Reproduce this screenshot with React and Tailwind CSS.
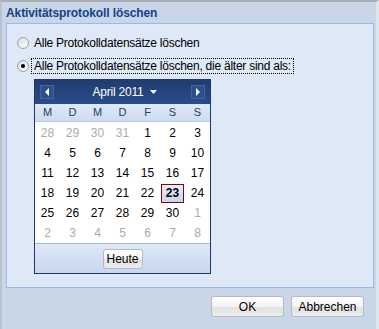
import React from 'react';

const weeks = [
  [[28, 1], [29, 1], [30, 1], [31, 1], [1], [2], [3]],
  [[4], [5], [6], [7], [8], [9], [10]],
  [[11], [12], [13], [14], [15], [16], [17]],
  [[18], [19], [20], [21], [22], [23], [24]],
  [[25], [26], [27], [28], [29], [30], [1, 1]],
  [[2, 1], [3, 1], [4, 1], [5, 1], [6, 1], [7, 1], [8, 1]],
];

const dayNames = ['M', 'D', 'M', 'D', 'F', 'S', 'S'];

function Radio({ checked }) {
  return (
    <span className="w-[12px] h-[12px] rounded-full border border-[#9aa3ad] bg-gradient-to-br from-[#d8dde2] to-white flex items-center justify-center shrink-0">
      {checked && <span className="w-[4px] h-[4px] rounded-full bg-black" />}
    </span>
  );
}

function Button({ children, className }) {
  return (
    <button
      className={
        'border border-[#b5b8c8] rounded-[3px] bg-[linear-gradient(#ffffff_0%,#f4f4f4_50%,#e1e1e1_51%,#ececec_100%)] text-[12px] text-black flex items-center justify-center ' +
        className
      }
    >
      {children}
    </button>
  );
}

function NavButton({ dir }) {
  return (
    <div className="w-[14px] h-[14px] bg-[#2d4f8e] border border-[#4466a0] flex items-center justify-center">
      <svg width="6" height="8" viewBox="0 0 6 8">
        {dir === 'left' ? (
          <path d="M5 0 L1 4 L5 8 Z" fill="white" />
        ) : (
          <path d="M1 0 L5 4 L1 8 Z" fill="white" />
        )}
      </svg>
    </div>
  );
}

export default function App() {
  return (
    <div className="w-[379px] h-[329px] bg-[#c9d6e7] border-t-2 border-t-[#a9aeb4] border-l-2 border-l-[#b9c3cf] border-r-[3px] border-r-[#dfe4ea] overflow-hidden font-['Liberation_Sans',Arial,sans-serif] flex flex-col">
      <div className="h-[21px] pl-[4px] pt-[4px] text-[12px] font-bold text-[#15428b] leading-[14px] tracking-[-0.1px]">
        Aktivitätsprotokoll löschen
      </div>

      <div className="ml-[4px] w-[368px] h-[265px] bg-[#dfe8f6] border border-[#99bbe8] pl-[10px] pt-[12px]">
        <div className="flex items-center gap-[5px] h-[14px]">
          <Radio />
          <span className="text-[12px] text-black leading-[14px] tracking-[-0.25px]">Alle Protokolldatensätze löschen</span>
        </div>
        <div className="flex items-center gap-[2px] h-[16px] mt-[8px]">
          <Radio checked />
          <span className="text-[12px] text-black leading-[14px] tracking-[-0.25px] border border-dotted border-black px-[2px]">
            Alle Protokolldatensätze löschen, die älter sind als:
          </span>
        </div>

        <div className="ml-[17px] mt-[5px] w-[177px] border border-[#1b376c] bg-white">
          <div className="h-[24px] bg-[linear-gradient(#203c70,#2a4c8a)] flex items-center justify-between px-[5px]">
            <NavButton dir="left" />
            <div className="flex items-center gap-[6px] text-white text-[12px] tracking-[-0.2px] pl-[4px]">
              <span>April 2011</span>
              <svg width="7" height="4" viewBox="0 0 7 4">
                <path d="M0 0 L7 0 L3.5 4 Z" fill="white" />
              </svg>
            </div>
            <NavButton dir="right" />
          </div>
          <div className="grid grid-cols-7 h-[18px] bg-[linear-gradient(#dfe8f6,#cddcf0)] border-b border-[#b8c9e0]">
            {dayNames.map((d, i) => (
              <div key={i} className="flex items-center justify-center text-[11px] text-[#233d6d]">
                {d}
              </div>
            ))}
          </div>
          <div className="pt-[1px]">
            {weeks.map((w, wi) => (
              <div key={wi} className="grid grid-cols-7 h-[20px]">
                {w.map(([n, other], di) => {
                  const today = wi === 3 && di === 5;
                  return (
                    <div key={di} className="flex items-center justify-center">
                      {today ? (
                        <span className="w-[23px] h-[19px] border border-[#8b0000] bg-[linear-gradient(#e6eefa,#c6d6ee)] flex items-center justify-center text-[12px] font-bold text-black">
                          {n}
                        </span>
                      ) : (
                        <span className={'text-[12px] ' + (other ? 'text-[#aaaaaa]' : 'text-black')}>{n}</span>
                      )}
                    </div>
                  );
                })}
              </div>
            ))}
          </div>
          <div className="h-[30px] border-t border-[#a3bad9] bg-[linear-gradient(#dfe8f6,#c7d7ee)] flex items-center justify-center">
            <Button className="w-[40px] h-[20px]">Heute</Button>
          </div>
        </div>
      </div>

      <div className="flex justify-end gap-[7px] pr-[12px] mt-[8px]">
        <Button className="w-[73px] h-[21px]">OK</Button>
        <Button className="w-[73px] h-[21px]">Abbrechen</Button>
      </div>
    </div>
  );
}
